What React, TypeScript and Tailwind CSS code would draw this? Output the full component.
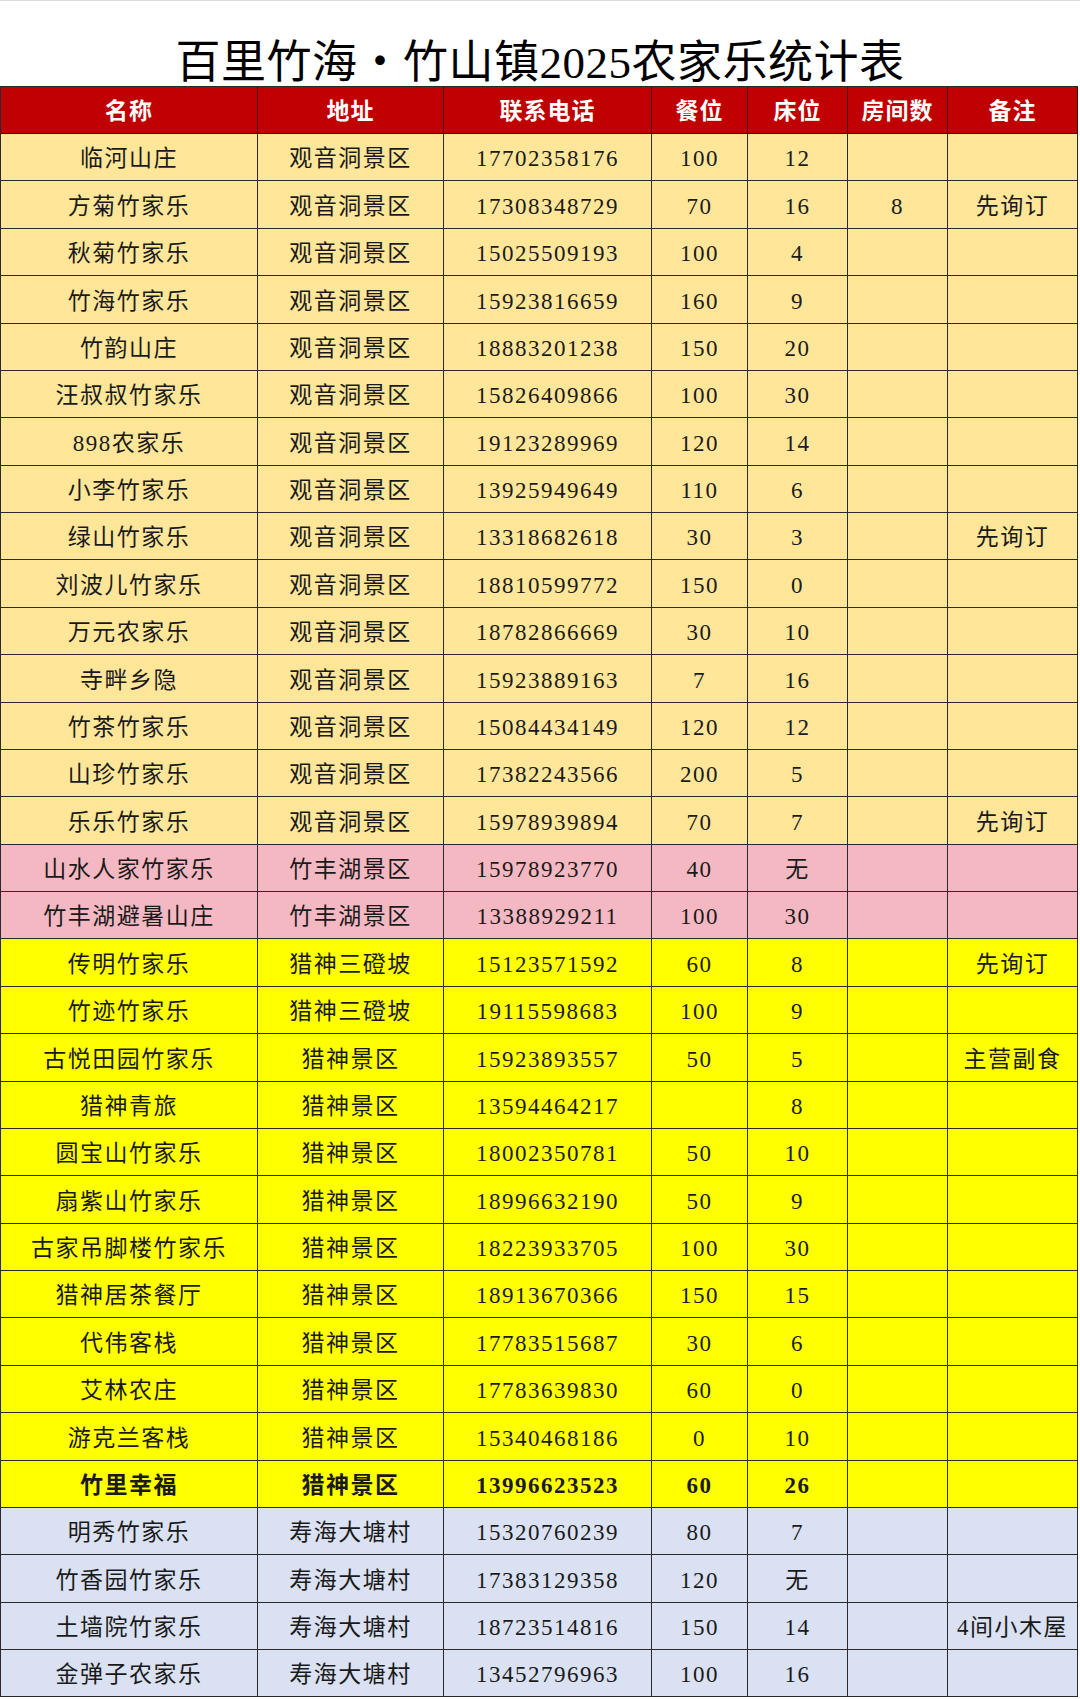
const FONT = "font-['Liberation_Serif','Noto_Sans_CJK_SC',serif]";

type Row = [string, string, string, string, string, string?, string?];

const gold: Row[] = [
  ["临河山庄", "观音洞景区", "17702358176", "100", "12"],
  ["方菊竹家乐", "观音洞景区", "17308348729", "70", "16", "8", "先询订"],
  ["秋菊竹家乐", "观音洞景区", "15025509193", "100", "4"],
  ["竹海竹家乐", "观音洞景区", "15923816659", "160", "9"],
  ["竹韵山庄", "观音洞景区", "18883201238", "150", "20"],
  ["汪叔叔竹家乐", "观音洞景区", "15826409866", "100", "30"],
  ["898农家乐", "观音洞景区", "19123289969", "120", "14"],
  ["小李竹家乐", "观音洞景区", "13925949649", "110", "6"],
  ["绿山竹家乐", "观音洞景区", "13318682618", "30", "3", "", "先询订"],
  ["刘波儿竹家乐", "观音洞景区", "18810599772", "150", "0"],
  ["万元农家乐", "观音洞景区", "18782866669", "30", "10"],
  ["寺畔乡隐", "观音洞景区", "15923889163", "7", "16"],
  ["竹茶竹家乐", "观音洞景区", "15084434149", "120", "12"],
  ["山珍竹家乐", "观音洞景区", "17382243566", "200", "5"],
  ["乐乐竹家乐", "观音洞景区", "15978939894", "70", "7", "", "先询订"],
];

const pink: Row[] = [
  ["山水人家竹家乐", "竹丰湖景区", "15978923770", "40", "无"],
  ["竹丰湖避暑山庄", "竹丰湖景区", "13388929211", "100", "30"],
];

const yellow: Row[] = [
  ["传明竹家乐", "猎神三磴坡", "15123571592", "60", "8", "", "先询订"],
  ["竹迹竹家乐", "猎神三磴坡", "19115598683", "100", "9"],
  ["古悦田园竹家乐", "猎神景区", "15923893557", "50", "5", "", "主营副食"],
  ["猎神青旅", "猎神景区", "13594464217", "", "8"],
  ["圆宝山竹家乐", "猎神景区", "18002350781", "50", "10"],
  ["扇紫山竹家乐", "猎神景区", "18996632190", "50", "9"],
  ["古家吊脚楼竹家乐", "猎神景区", "18223933705", "100", "30"],
  ["猎神居茶餐厅", "猎神景区", "18913670366", "150", "15"],
  ["代伟客栈", "猎神景区", "17783515687", "30", "6"],
  ["艾林农庄", "猎神景区", "17783639830", "60", "0"],
  ["游克兰客栈", "猎神景区", "15340468186", "0", "10"],
];

const blue: Row[] = [
  ["明秀竹家乐", "寿海大塘村", "15320760239", "80", "7"],
  ["竹香园竹家乐", "寿海大塘村", "17383129358", "120", "无"],
  ["土墙院竹家乐", "寿海大塘村", "18723514816", "150", "14", "", "4间小木屋"],
  ["金弹子农家乐", "寿海大塘村", "13452796963", "100", "16"],
];

const headers = ["名称", "地址", "联系电话", "餐位", "床位", "房间数", "备注"];

const COLS = "grid grid-cols-[257px_186px_208px_96px_100px_100px_130px]";

function DataRow({ row, bg, bold }: { row: Row; bg: string; bold?: boolean }) {
  const cells = [row[0], row[1], row[2], row[3], row[4], row[5] ?? "", row[6] ?? ""];
  return (
    <div className={`${COLS} h-[47.39px] ${bg}`}>
      {cells.map((c, i) => (
        <div
          key={i}
          className={`flex items-center justify-center pt-[5px] border-r border-b border-[#2a2a2a] text-[23px] tracking-[1.5px] text-[#1a1a1a] whitespace-nowrap ${
            bold ? "font-bold" : ""
          }`}
        >
          {c}
        </div>
      ))}
    </div>
  );
}

export default function App() {
  return (
    <div className={`w-[1080px] bg-white ${FONT}`}>
      <div className="h-[86px] border-t border-[#dcdcdc] flex items-end justify-center pb-0">
        <h1 className="text-[45px] leading-none tracking-[0.5px] text-black">百里竹海・竹山镇2025农家乐统计表</h1>
      </div>
      <div className="w-[1078px] border-t border-l border-[#2a2a2a]">
        <div className={`${COLS} h-[47px] bg-[#c00000]`}>
          {headers.map((h) => (
            <div
              key={h}
              className="flex items-center justify-center pt-[5px] border-r border-b border-[#3a0000] text-[23px] tracking-[1px] font-bold text-white"
            >
              {h}
            </div>
          ))}
        </div>
        {gold.map((r) => (
          <DataRow key={r[0]} row={r} bg="bg-[#ffe699]" />
        ))}
        {pink.map((r) => (
          <DataRow key={r[0]} row={r} bg="bg-[#f4b8c2]" />
        ))}
        {yellow.map((r) => (
          <DataRow key={r[0]} row={r} bg="bg-[#ffff00]" />
        ))}
        <DataRow row={["竹里幸福", "猎神景区", "13996623523", "60", "26"]} bg="bg-[#ffff00]" bold />
        {blue.map((r) => (
          <DataRow key={r[0]} row={r} bg="bg-[#d9e1f2]" />
        ))}
      </div>
    </div>
  );
}
